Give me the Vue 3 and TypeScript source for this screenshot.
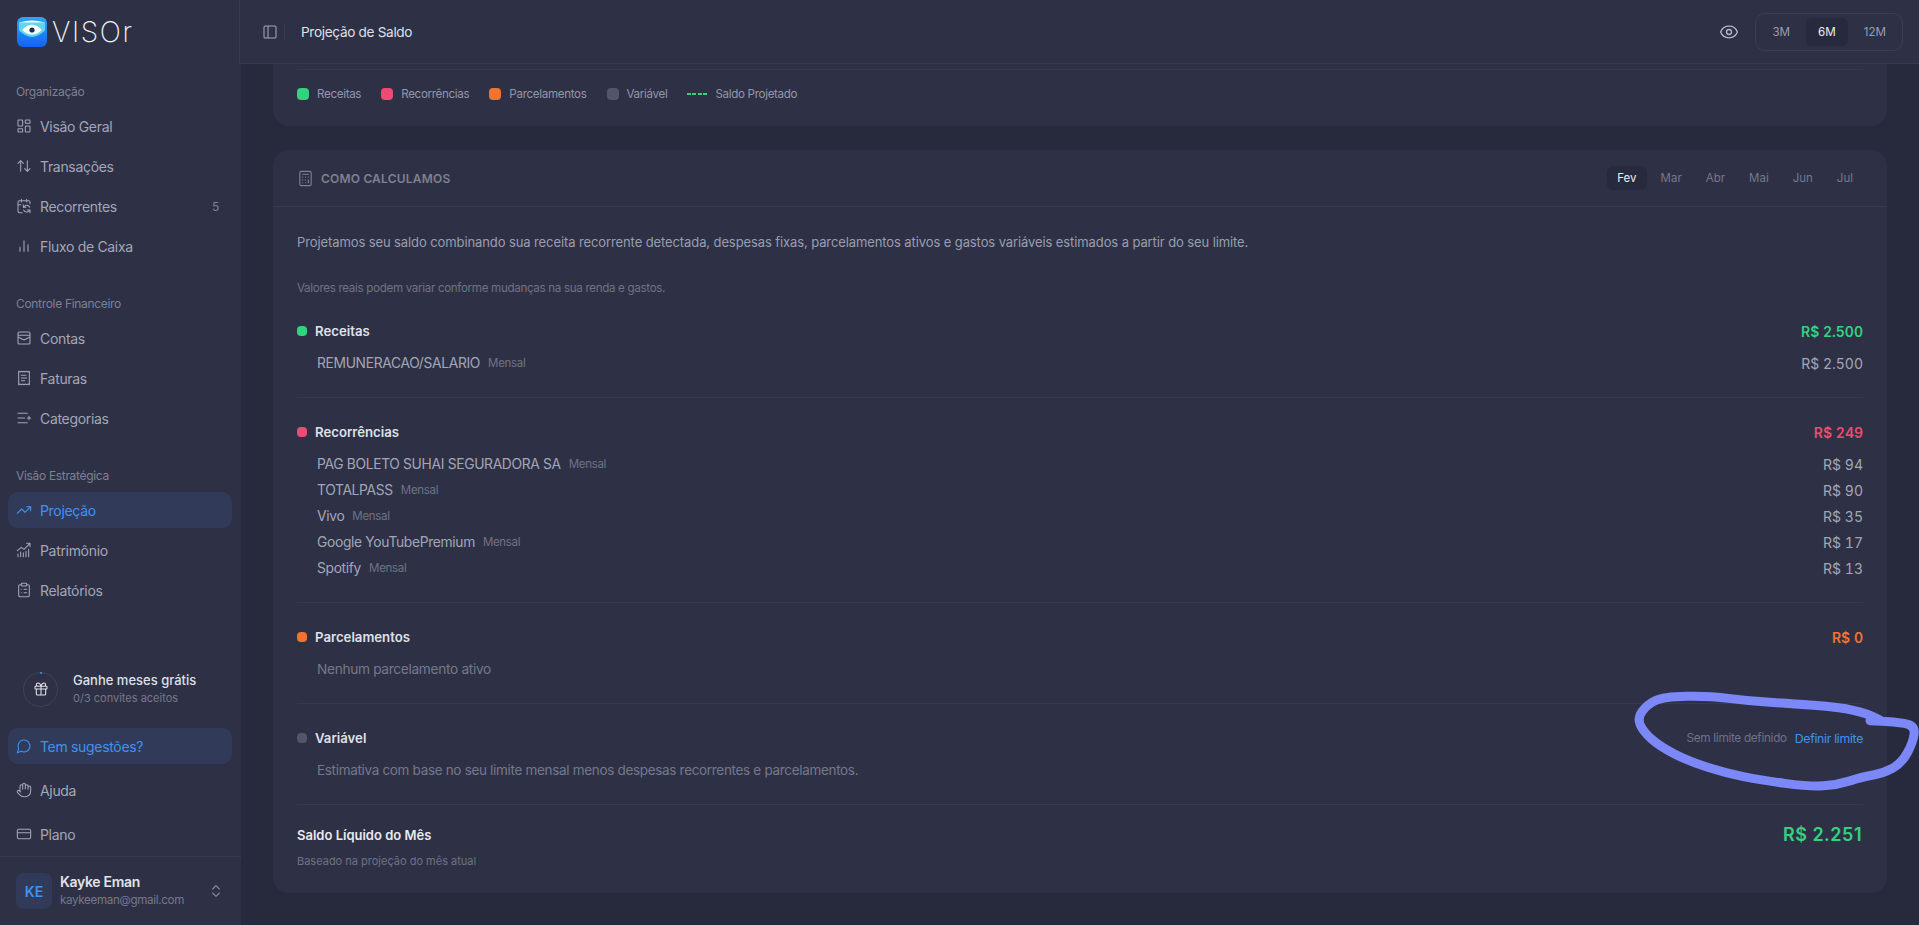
<script setup lang="ts">
interface NavItem {
  label: string
  icon: string
  badge?: string
  active?: boolean
}

interface Entry {
  name: string
  value: string
}

interface Section {
  title: string
  color: string
  total: string
  entries: Entry[]
}

const icons: Record<string, string> = {
  grid: 'M4 3h5a1 1 0 0 1 1 1v7a1 1 0 0 1-1 1H4a1 1 0 0 1-1-1V4a1 1 0 0 1 1-1Z M15 3h5a1 1 0 0 1 1 1v3a1 1 0 0 1-1 1h-5a1 1 0 0 1-1-1V4a1 1 0 0 1 1-1Z M15 12h5a1 1 0 0 1 1 1v7a1 1 0 0 1-1 1h-5a1 1 0 0 1-1-1v-7a1 1 0 0 1 1-1Z M4 16h5a1 1 0 0 1 1 1v3a1 1 0 0 1-1 1H4a1 1 0 0 1-1-1v-3a1 1 0 0 1 1-1Z',
  swap: 'm21 16-4 4-4-4 M17 20V4 M3 8l4-4 4 4 M7 4v16',
  sync: 'M11 10v4h4 m-4 0 1.535-1.605a5 5 0 0 1 8 1.5 M16 2v4 m5 12-1.535 1.605a5 5 0 0 1-8-1.5 M21 22v-4h-4 M21 8.5V6a2 2 0 0 0-2-2H5a2 2 0 0 0-2 2v14a2 2 0 0 0 2 2h4.3 M3 10h4 M8 2v4',
  bars: 'M18 20V10 M12 20V4 M6 20v-6',
  mailbox: 'M5 3h14a2 2 0 0 1 2 2v14a2 2 0 0 1-2 2H5a2 2 0 0 1-2-2V5a2 2 0 0 1 2-2Z M3 8h18 M3 10.5l9 4.5 9-4.5',
  receipt: 'M4 2v20l2-1 2 1 2-1 2 1 2-1 2 1 2-1 2 1V2l-2 1-2-1-2 1-2-1-2 1-2-1-2 1Z M15 8H8 M16 12H8 M13 16H8',
  listplus: 'M3 5h14 M3 12h10 M3 19h14 M17 12h5 M19.5 9.5v5',
  trend: 'M22 7l-8.5 8.5-5-5L2 17 M16 7h6v6',
  wealth: 'M2 13l6-5 4 3 9-9 M16 2h5v5 M3 22v-4 M7 22v-7 M11 22v-6 M15 22v-8 M19 22v-11',
  clipboard: 'M9 2h6a1 1 0 0 1 1 1v2a1 1 0 0 1-1 1H9a1 1 0 0 1-1-1V3a1 1 0 0 1 1-1Z M16 4h2a2 2 0 0 1 2 2v14a2 2 0 0 1-2 2H6a2 2 0 0 1-2-2V6a2 2 0 0 1 2-2h2 M12 11h4 M12 16h4 M8 11h.01 M8 16h.01',
  chat: 'M7.9 20A9 9 0 1 0 4 16.1L2 22Z',
  hand: 'M18 11V6a2 2 0 0 0-4 0 M14 10V4a2 2 0 0 0-4 0v2 M10 10.5V6a2 2 0 0 0-4 0v8 M18 8a2 2 0 1 1 4 0v6a8 8 0 0 1-8 8h-2c-2.8 0-4.5-.86-5.99-2.34l-3.6-3.6a2 2 0 0 1 2.83-2.82L7 15',
  card: 'M4 5h16a2 2 0 0 1 2 2v10a2 2 0 0 1-2 2H4a2 2 0 0 1-2-2V7a2 2 0 0 1 2-2Z M2 10h20',
  gift: 'M4 8h16a1 1 0 0 1 1 1v2a1 1 0 0 1-1 1H4a1 1 0 0 1-1-1V9a1 1 0 0 1 1-1Z M12 8v13 M19 12v7a2 2 0 0 1-2 2H7a2 2 0 0 1-2-2v-7 M7.5 8a2.5 2.5 0 0 1 0-5A4.8 8 0 0 1 12 8a4.8 8 0 0 1 4.5-5 2.5 2.5 0 0 1 0 5',
  updown: 'm7 15 5 5 5-5 M7 9l5-5 5 5',
  panel: 'M5 3h14a2 2 0 0 1 2 2v14a2 2 0 0 1-2 2H5a2 2 0 0 1-2-2V5a2 2 0 0 1 2-2Z M9 3v18',
  eye: 'M2.062 12.348a1 1 0 0 1 0-.696 10.75 10.75 0 0 1 19.876 0 1 1 0 0 1 0 .696 10.75 10.75 0 0 1-19.876 0 M15 12a3 3 0 1 1-6 0 3 3 0 0 1 6 0Z',
  calc: 'M6 2h12a2 2 0 0 1 2 2v16a2 2 0 0 1-2 2H6a2 2 0 0 1-2-2V4a2 2 0 0 1 2-2Z M8 6h8 M16 14v4 M16 10h.01 M12 10h.01 M8 10h.01 M12 14h.01 M8 14h.01 M12 18h.01 M8 18h.01',
}

const groups: { title: string; items: NavItem[] }[] = [
  {
    title: 'Organização',
    items: [
      { label: 'Visão Geral', icon: 'grid' },
      { label: 'Transações', icon: 'swap' },
      { label: 'Recorrentes', icon: 'sync', badge: '5' },
      { label: 'Fluxo de Caixa', icon: 'bars' },
    ],
  },
  {
    title: 'Controle Financeiro',
    items: [
      { label: 'Contas', icon: 'mailbox' },
      { label: 'Faturas', icon: 'receipt' },
      { label: 'Categorias', icon: 'listplus' },
    ],
  },
  {
    title: 'Visão Estratégica',
    items: [
      { label: 'Projeção', icon: 'trend', active: true },
      { label: 'Patrimônio', icon: 'wealth' },
      { label: 'Relatórios', icon: 'clipboard' },
    ],
  },
]

const footerItems: NavItem[] = [
  { label: 'Tem sugestões?', icon: 'chat', active: true },
  { label: 'Ajuda', icon: 'hand' },
  { label: 'Plano', icon: 'card' },
]

const legend = [
  { label: 'Receitas', color: '#34d17f' },
  { label: 'Recorrências', color: '#ec4b72' },
  { label: 'Parcelamentos', color: '#ee7430' },
  { label: 'Variável', color: '#53566b' },
]

const ranges = ['3M', '6M', '12M']
const months = ['Fev', 'Mar', 'Abr', 'Mai', 'Jun', 'Jul']

const sections: Section[] = [
  {
    title: 'Receitas',
    color: '#34d17f',
    total: 'R$ 2.500',
    entries: [{ name: 'REMUNERACAO/SALARIO', value: 'R$ 2.500' }],
  },
  {
    title: 'Recorrências',
    color: '#ec4b72',
    total: 'R$ 249',
    entries: [
      { name: 'PAG BOLETO SUHAI SEGURADORA SA', value: 'R$ 94' },
      { name: 'TOTALPASS', value: 'R$ 90' },
      { name: 'Vivo', value: 'R$ 35' },
      { name: 'Google YouTubePremium', value: 'R$ 17' },
      { name: 'Spotify', value: 'R$ 13' },
    ],
  },
]

// rabisco feito à mão por cima do print
const scribblePoints = [
  [1870, 720.7], [1893.3, 721.7], [1915, 725], [1913.3, 741.7], [1901.7, 763.3], [1883.3, 773.3],
  [1863.3, 776.7], [1836.7, 785], [1810, 786.7], [1760, 780], [1726.7, 773.3], [1690, 761.7],
  [1660, 746.7], [1643.3, 731.7], [1637.3, 718.3], [1646.7, 705], [1663.3, 696.7], [1710, 696],
  [1746.7, 700.7], [1786.7, 703.3], [1840, 707.3], [1866.7, 713.3], [1880, 720],
]

const scribblePath = scribblePoints.reduce((d, p, i, all) => {
  if (i === 0) return `M${p[0]} ${p[1]}`
  const prev = all[i - 1]
  return `${d}Q${prev[0]} ${prev[1]} ${(prev[0] + p[0]) / 2} ${(prev[1] + p[1]) / 2}`
}, '') + `L${scribblePoints[scribblePoints.length - 1].join(' ')}`
</script>

<template>
  <div class="app-shell">
    <aside class="sidebar">
      <div class="brand">
        <svg class="brand-mark" viewBox="0 0 30 30">
          <defs>
            <linearGradient id="markGrad" x1="0" y1="0" x2="0" y2="1">
              <stop offset="0%" stop-color="#2fa6f5" />
              <stop offset="100%" stop-color="#1263f1" />
            </linearGradient>
          </defs>
          <rect width="30" height="30" rx="6" fill="url(#markGrad)" />
          <path d="M2.5 5.5Q15 1.5 27.5 5.5L27.5 8H2.5Z" fill="#f2fbff" />
          <path d="M2 5.5H28V13.5Q21 20 15 20Q9 20 2 13.5Z" fill="#5ed6ec" />
          <path d="M5 13Q15 2.5 25 13Q15 22 5 13Z" fill="#fff" />
          <circle cx="15" cy="13" r="2.6" fill="#16324f" />
        </svg>
        <span class="brand-name">VISOr</span>
      </div>

      <nav class="nav-groups">
        <section v-for="group in groups" :key="group.title" class="nav-group">
          <h4 class="nav-title">{{ group.title }}</h4>
          <a v-for="item in group.items" :key="item.label" class="nav-item" :class="{ on: item.active }">
            <svg class="ico" viewBox="0 0 24 24"><path :d="icons[item.icon]" /></svg>
            <span class="nav-label">{{ item.label }}</span>
            <span v-if="item.badge" class="nav-badge">{{ item.badge }}</span>
          </a>
        </section>
      </nav>

      <div class="invite">
        <div class="invite-ring">
          <svg class="ico" viewBox="0 0 24 24"><path :d="icons.gift" /></svg>
        </div>
        <div>
          <div class="invite-title">Ganhe meses grátis</div>
          <div class="invite-sub">0/3 convites aceitos</div>
        </div>
      </div>

      <div class="footer-nav">
        <a v-for="item in footerItems" :key="item.label" class="nav-item" :class="{ on: item.active }">
          <svg class="ico" viewBox="0 0 24 24"><path :d="icons[item.icon]" /></svg>
          <span class="nav-label">{{ item.label }}</span>
        </a>
      </div>

      <div class="user">
        <div class="avatar">KE</div>
        <div class="user-info">
          <div class="user-name">Kayke Eman</div>
          <div class="user-mail">kaykeeman@gmail.com</div>
        </div>
        <svg class="ico user-caret" viewBox="0 0 24 24"><path :d="icons.updown" /></svg>
      </div>
    </aside>

    <main class="main">
      <header class="topbar">
        <svg class="ico panel-ico" viewBox="0 0 24 24"><path :d="icons.panel" /></svg>
        <span class="topbar-sep"></span>
        <span class="topbar-title">Projeção de Saldo</span>
        <svg class="ico eye-ico" viewBox="0 0 24 24"><path :d="icons.eye" /></svg>
        <div class="range">
          <button v-for="r in ranges" :key="r" class="range-btn" :class="{ on: r === '6M' }">{{ r }}</button>
        </div>
      </header>

      <div class="content">
        <section class="card legend-card">
          <div class="legend">
            <span v-for="l in legend" :key="l.label" class="legend-item">
              <i class="legend-dot" :style="{ background: l.color }"></i>{{ l.label }}
            </span>
            <span class="legend-item">
              <i class="legend-dash"></i>Saldo Projetado
            </span>
          </div>
        </section>

        <section class="card calc-card">
          <div class="calc-head">
            <svg class="ico calc-ico" viewBox="0 0 24 24"><path :d="icons.calc" /></svg>
            <h3 class="calc-title">COMO CALCULAMOS</h3>
            <div class="months">
              <button v-for="m in months" :key="m" class="month" :class="{ on: m === 'Fev' }">{{ m }}</button>
            </div>
          </div>

          <div class="calc-body">
            <p class="intro">Projetamos seu saldo combinando sua receita recorrente detectada, despesas fixas, parcelamentos ativos e gastos variáveis estimados a partir do seu limite.</p>
            <p class="note">Valores reais podem variar conforme mudanças na sua renda e gastos.</p>

            <div v-for="s in sections" :key="s.title" class="block">
              <div class="block-head">
                <i class="block-dot" :style="{ background: s.color }"></i>
                <span class="block-title">{{ s.title }}</span>
                <span class="block-total" :style="{ color: s.color }">{{ s.total }}</span>
              </div>
              <div class="rows">
                <div v-for="e in s.entries" :key="e.name" class="row">
                  <span class="row-name">{{ e.name }}</span>
                  <span class="row-tag">Mensal</span>
                  <span class="row-value">{{ e.value }}</span>
                </div>
              </div>
            </div>

            <div class="block">
              <div class="block-head">
                <i class="block-dot" style="background: #ee7430"></i>
                <span class="block-title">Parcelamentos</span>
                <span class="block-total" style="color: #ee7430">R$ 0</span>
              </div>
              <div class="rows">
                <div class="row"><span class="row-empty">Nenhum parcelamento ativo</span></div>
              </div>
            </div>

            <div class="block">
              <div class="block-head">
                <i class="block-dot" style="background: #53566b"></i>
                <span class="block-title">Variável</span>
                <span class="limit-note">Sem limite definido</span>
                <a class="limit-link">Definir limite</a>
              </div>
              <div class="rows">
                <div class="row"><span class="row-desc">Estimativa com base no seu limite mensal menos despesas recorrentes e parcelamentos.</span></div>
              </div>
            </div>

            <div class="net">
              <div>
                <div class="net-title">Saldo Líquido do Mês</div>
                <div class="net-sub">Baseado na projeção do mês atual</div>
              </div>
              <div class="net-value">R$ 2.251</div>
            </div>
          </div>
        </section>
      </div>
    </main>

    <svg class="scribble" viewBox="0 0 1919 925">
      <path :d="scribblePath" />
    </svg>
  </div>
</template>

<style>
html,
body {
  margin: 0;
  background: #272a3d;
}
</style>

<style scoped>
.app-shell {
  display: flex;
  position: relative;
  height: 925px;
  overflow: hidden;
  background: #272a3d;
  font-family: Inter, "Noto Sans", sans-serif;
  letter-spacing: -0.02em;
  color: #a3a6b8;
}

.ico {
  width: 16px;
  height: 16px;
  flex: none;
  fill: none;
  stroke: currentColor;
  stroke-width: 1.6;
  stroke-linecap: round;
  stroke-linejoin: round;
}

.sidebar {
  width: 241px;
  flex: none;
  display: flex;
  flex-direction: column;
  background: #2e3145;
  box-sizing: border-box;
}

.brand {
  height: 68px;
  flex: none;
  display: flex;
  align-items: flex-start;
  gap: 5px;
  padding: 17px 0 0 17px;
  box-sizing: border-box;
}

.brand-mark {
  width: 30px;
  height: 30px;
}

.brand-name {
  font-size: 28px;
  line-height: 30px;
  font-weight: 200;
  letter-spacing: 1.6px;
  color: #f0f1f6;
}

.nav-groups {
  flex: 1;
  padding: 8px 9px 0 8px;
}

.nav-group + .nav-group {
  margin-top: 24px;
}

.nav-title {
  margin: 0;
  height: 32px;
  padding-left: 8px;
  font-size: 12px;
  line-height: 32px;
  font-weight: 400;
  color: #7d8093;
}

.nav-item {
  display: flex;
  align-items: center;
  gap: 8px;
  height: 36px;
  padding: 0 8px;
  border-radius: 10px;
  font-size: 14px;
  color: #a3a6b8;
}

.nav-item + .nav-item {
  margin-top: 4px;
}

.nav-item.on {
  background: #313b59;
  color: #3f93f0;
}

.nav-label {
  flex: 1;
}

.nav-badge {
  margin-right: 5px;
  font-size: 12px;
  color: #7d8093;
}

.invite {
  display: flex;
  align-items: center;
  gap: 15px;
  padding: 0 0 21px 23px;
}

.invite-ring {
  position: relative;
  width: 33px;
  height: 33px;
  display: flex;
  align-items: center;
  justify-content: center;
  border: 1px solid #3f4259;
  border-radius: 50%;
  color: #dfe0e8;
}

.invite-ring::after {
  content: "";
  position: absolute;
  top: -1px;
  left: 50%;
  width: 2px;
  height: 2px;
  margin-left: -1px;
  background: #3f93f0;
  border-radius: 50%;
}

.invite-title {
  font-size: 13px;
  line-height: 18px;
  font-weight: 500;
  letter-spacing: 0;
  color: #dfe0e8;
}

.invite-sub {
  font-size: 11px;
  line-height: 18px;
  letter-spacing: 0;
  color: #75788c;
}

.footer-nav {
  padding: 0 9px 4px 8px;
}

.footer-nav .nav-item + .nav-item {
  margin-top: 8px;
}

.user {
  height: 69px;
  flex: none;
  display: flex;
  align-items: center;
  gap: 8px;
  padding: 0 16px;
  box-sizing: border-box;
  border-top: 1px solid #383b50;
}

.avatar {
  width: 36px;
  height: 36px;
  flex: none;
  display: flex;
  align-items: center;
  justify-content: center;
  border-radius: 8px;
  background: #313b59;
  color: #3f93f0;
  font-size: 14px;
  font-weight: 600;
  letter-spacing: 0;
}

.user-info {
  flex: 1;
  min-width: 0;
}

.user-name {
  font-size: 14px;
  line-height: 18px;
  font-weight: 600;
  color: #e2e3ea;
}

.user-mail {
  font-size: 11.6px;
  line-height: 18px;
  color: #75788c;
}

.user-caret {
  color: #8a8da0;
  margin-right: 1px;
}

.main {
  flex: 1;
  min-width: 0;
  display: flex;
  flex-direction: column;
}

.topbar {
  height: 64px;
  flex: none;
  display: flex;
  align-items: center;
  padding: 0 16px 0 22px;
  margin-left: -2px;
  box-sizing: border-box;
  background: #2e3145;
  border-left: 1px solid #383b50;
  border-bottom: 1px solid #383b50;
  position: relative;
}

.panel-ico {
  color: #a3a6b8;
}

.topbar-sep {
  width: 1px;
  height: 16px;
  margin: 0 16px 0 6px;
  background: #383b50;
}

.topbar-title {
  flex: 1;
  font-size: 13.6px;
  font-weight: 400;
  color: #dfe0e8;
}

.eye-ico {
  width: 20px;
  height: 20px;
  margin-right: 16px;
  color: #b5b7c6;
}

.range {
  display: flex;
  align-items: center;
  padding: 4px;
  gap: 4px;
  height: 38px;
  box-sizing: border-box;
  border: 1px solid #3b3e54;
  border-radius: 10px;
}

.range-btn {
  height: 28px;
  padding: 0 12px;
  border: 0;
  border-radius: 6px;
  background: none;
  font: inherit;
  font-size: 11.6px;
  color: #9a9db0;
}

.range-btn.on {
  background: #272a3d;
  color: #ecedf3;
}

.content {
  flex: 1;
  min-height: 0;
  padding: 0 32px 0;
  display: flex;
  flex-direction: column;
  gap: 24px;
}

.card {
  background: #2e3145;
  border-radius: 16px;
}

.legend-card {
  height: 62px;
  flex: none;
  padding: 5px 24px 0;
  box-sizing: border-box;
  border-radius: 0 0 16px 16px;
}

.legend {
  display: flex;
  align-items: center;
  gap: 20px;
  height: 48px;
  border-top: 1px solid #383b50;
  font-size: 11.6px;
  color: #9296a9;
}

.legend-item {
  display: flex;
  align-items: center;
  gap: 8px;
}

.legend-dot {
  width: 12px;
  height: 12px;
  border-radius: 4px;
}

.legend-dash {
  width: 20px;
  height: 2px;
  background: repeating-linear-gradient(90deg, #34d17f 0 4px, transparent 4px 5.4px);
}

.calc-head {
  height: 57px;
  display: flex;
  align-items: center;
  gap: 7px;
  padding: 0 24px;
  box-sizing: border-box;
  border-bottom: 1px solid #383b50;
}

.calc-ico {
  width: 17px;
  height: 17px;
  color: #7d8093;
}

.calc-title {
  flex: 1;
  margin: 0;
  font-size: 12px;
  font-weight: 600;
  letter-spacing: 0.2px;
  color: #7d8093;
}

.months {
  display: flex;
  gap: 4px;
}

.month {
  height: 24px;
  padding: 0 10px;
  border: 0;
  border-radius: 6px;
  background: none;
  font: inherit;
  font-size: 11.5px;
  color: #75788c;
}

.month.on {
  background: #272a3d;
  color: #ecedf3;
}

.calc-body {
  padding: 24px 24px 0;
}

.intro {
  margin: 0 0 24px;
  font-size: 13px;
  line-height: 22px;
  letter-spacing: -0.1px;
  color: #9a9db0;
}

.note {
  margin: 0;
  font-size: 11.6px;
  line-height: 22px;
  color: #6f7286;
}

.block {
  padding: 21px 0 21px;
  border-bottom: 1px solid #383b50;
}

.block + .block {
  padding-top: 23px;
}

.block-head {
  height: 22px;
  display: flex;
  align-items: center;
}

.block-dot {
  width: 10px;
  height: 10px;
  margin-right: 8px;
  border-radius: 4px;
}

.block-title {
  flex: 1;
  font-size: 13.2px;
  font-weight: 600;
  letter-spacing: 0;
  color: #dfe0e8;
}

.block-total {
  font-size: 14px;
  font-weight: 600;
  letter-spacing: 0;
  font-variant-numeric: tabular-nums;
}

.limit-note {
  font-size: 11.8px;
  color: #6f7286;
}

.limit-link {
  margin-left: 8px;
  font-size: 12.3px;
  color: #3f93f0;
}

.rows {
  margin-top: 8px;
  padding-left: 20px;
}

.row {
  height: 26px;
  display: flex;
  align-items: center;
  font-size: 13.8px;
}

.row-name {
  color: #a3a6b8;
}

.row-tag {
  flex: 1;
  margin-left: 8px;
  font-size: 11.5px;
  color: #6f7286;
}

.row-value {
  font-size: 14px;
  color: #a3a6b8;
  letter-spacing: 0;
  font-variant-numeric: tabular-nums;
}

.row-empty,
.row-desc {
  color: #75788c;
}

.row-empty {
  font-size: 13.7px;
}

.row-desc {
  font-size: 13.5px;
}

.net {
  display: flex;
  align-items: flex-start;
  justify-content: space-between;
  padding: 20px 0 24px;
}

.net-title {
  font-size: 13px;
  line-height: 20px;
  font-weight: 600;
  letter-spacing: 0;
  color: #e9eaf0;
}

.net-sub {
  margin-top: 8px;
  font-size: 11px;
  line-height: 16px;
  letter-spacing: 0;
  color: #6f7286;
}

.net-value {
  margin-right: 1px;
  font-size: 18px;
  line-height: 20px;
  font-weight: 600;
  letter-spacing: 0.5px;
  color: #34d17f;
}

.scribble {
  position: absolute;
  inset: 0;
  width: 1919px;
  height: 925px;
  pointer-events: none;
  fill: none;
  stroke: #7c87f8;
  stroke-width: 9;
  stroke-linecap: round;
  stroke-linejoin: round;
}
</style>
